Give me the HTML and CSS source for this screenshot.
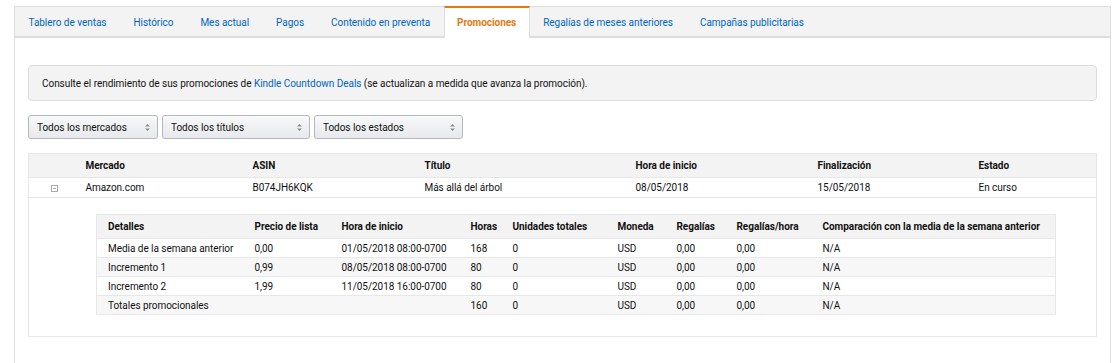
FILE: index.html
```html
<!DOCTYPE html>
<html lang="es">
<head>
<meta charset="utf-8">
<title>Promociones</title>
<link rel="stylesheet" href="styles.css">
</head>
<body>
<div class="page">
  <ul class="tabs">
    <li class="tab">Tablero de ventas</li>
    <li class="tab">Histórico</li>
    <li class="tab">Mes actual</li>
    <li class="tab">Pagos</li>
    <li class="tab">Contenido en preventa</li>
    <li class="tab active">Promociones</li>
    <li class="tab">Regalías de meses anteriores</li>
    <li class="tab">Campañas publicitarias</li>
  </ul>
  <div class="panel">
    <div class="notice">Consulte el rendimiento de sus promociones de <a class="link" href="#">Kindle Countdown Deals</a> (se actualizan a medida que avanza la promoción).</div>
    <div class="filters">
      <div class="select w1"><span>Todos los mercados</span><svg class="arrows" width="5" height="7" viewBox="0 0 5 7"><path d="M2.5 0L5 2.6H0Z M2.5 7L5 4.4H0Z" fill="#8d8d8d"/></svg></div>
      <div class="select w2"><span>Todos los títulos</span><svg class="arrows" width="5" height="7" viewBox="0 0 5 7"><path d="M2.5 0L5 2.6H0Z M2.5 7L5 4.4H0Z" fill="#8d8d8d"/></svg></div>
      <div class="select w3"><span>Todos los estados</span><svg class="arrows" width="5" height="7" viewBox="0 0 5 7"><path d="M2.5 0L5 2.6H0Z M2.5 7L5 4.4H0Z" fill="#8d8d8d"/></svg></div>
    </div>
    <table class="main">
      <colgroup>
        <col class="c-icon"><col class="c-mkt"><col class="c-asin"><col class="c-title"><col class="c-start"><col class="c-end"><col class="c-state">
      </colgroup>
      <thead>
        <tr><th></th><th>Mercado</th><th>ASIN</th><th>Título</th><th>Hora de inicio</th><th>Finalización</th><th>Estado</th></tr>
      </thead>
      <tbody>
        <tr class="row"><td class="icon-cell"><span class="collapse"></span></td><td>Amazon.com</td><td>B074JH6KQK</td><td>Más allá del árbol</td><td>08/05/2018</td><td>15/05/2018</td><td>En curso</td></tr>
        <tr class="detail-row">
          <td colspan="7" class="detail-cell">
            <table class="inner">
              <colgroup>
                <col class="d1"><col class="d2"><col class="d3"><col class="d4"><col class="d5"><col class="d6"><col class="d7"><col class="d8"><col class="d9">
              </colgroup>
              <thead>
                <tr><th>Detalles</th><th>Precio de lista</th><th>Hora de inicio</th><th>Horas</th><th>Unidades totales</th><th>Moneda</th><th>Regalías</th><th>Regalías/hora</th><th>Comparación con la media de la semana anterior</th></tr>
              </thead>
              <tbody>
                <tr><td>Media de la semana anterior</td><td>0,00</td><td>01/05/2018 08:00-0700</td><td>168</td><td>0</td><td>USD</td><td>0,00</td><td>0,00</td><td>N/A</td></tr>
                <tr class="alt"><td>Incremento 1</td><td>0,99</td><td>08/05/2018 08:00-0700</td><td>80</td><td>0</td><td>USD</td><td>0,00</td><td>0,00</td><td>N/A</td></tr>
                <tr><td>Incremento 2</td><td>1,99</td><td>11/05/2018 16:00-0700</td><td>80</td><td>0</td><td>USD</td><td>0,00</td><td>0,00</td><td>N/A</td></tr>
                <tr class="alt"><td>Totales promocionales</td><td></td><td></td><td>160</td><td>0</td><td>USD</td><td>0,00</td><td>0,00</td><td>N/A</td></tr>
              </tbody>
            </table>
          </td>
        </tr>
      </tbody>
    </table>
  </div>
</div>
</body>
</html>
```
FILE: styles.css
```css
* { box-sizing: border-box; }
html, body { height: 100%; }
body {
  margin: 0;
  padding: 6px 8px 0 14px;
  background: #fff;
  font-family: Roboto, "Liberation Sans", Arial, sans-serif;
  font-size: 10px;
  letter-spacing: -0.04px;
  color: #111;
}
.page {
  height: 100%;
  border: 1px solid #dddddd;
  border-bottom: none;
  display: flex;
  flex-direction: column;
}
.tabs {
  list-style: none;
  margin: 0;
  padding: 0;
  display: flex;
  background: #f3f3f3;
  border-bottom: 2px solid #dddddd;
  height: 31px;
}
.tab {
  padding: 1px 13.5px 0;
  line-height: 29px;
  color: #0066c0;
  white-space: nowrap;
}
.tab.active {
  background: #fff;
  color: #e47911;
  font-weight: 700;
  padding: 0 12.5px;
  border-left: 1px solid #dddddd;
  border-right: 1px solid #dddddd;
  border-top: 2px solid #e47911;
  margin-top: -1px;
  height: 32px;
  line-height: 29px;
}
.panel {
  padding: 27px 13px 28px 13px;
}
.notice {
  background: #f3f3f3;
  border: 1px solid #dddddd;
  border-radius: 4px;
  height: 36px;
  line-height: 35px;
  padding: 0 13px;
}
.link { color: #0066c0; text-decoration: none; }
.filters {
  display: flex;
  gap: 4px;
  margin-top: 14px;
}
.select {
  height: 24px;
  border: 1px solid #b4b7bc;
  border-radius: 3px;
  background: linear-gradient(#f7f8fa, #e7e9ec);
  display: flex;
  align-items: center;
  justify-content: space-between;
  padding: 0 7px 0 8px;
  box-shadow: inset 0 1px 0 rgba(255,255,255,.6);
}
.w1 { width: 130px; }
.w2 { width: 148px; }
.w3 { width: 149px; }
.arrows { display: block; }
.main {
  margin-top: 14px;
  width: 100%;
  border-collapse: collapse;
  table-layout: fixed;
  border: 1px solid #e7e7e7;
}
.c-icon { width: 50px; }
.c-mkt { width: 167px; }
.c-asin { width: 172px; }
.c-title { width: 211px; }
.c-start { width: 182px; }
.c-end { width: 161px; }
.c-state { width: auto; }
.main > thead th {
  background: #f3f3f3;
  font-weight: 700;
  text-align: left;
  height: 24px;
  padding: 0 7px;
  border-bottom: 1px solid #e7e7e7;
}
.main > tbody > .row td {
  height: 20px;
  padding: 0 7px;
  border-bottom: 1px solid #e7e7e7;
}
.icon-cell { text-align: center; }
.collapse {
  display: inline-block;
  width: 7px;
  height: 7px;
  border: 1px solid #a9a9a9;
  position: relative;
  vertical-align: -1px;
  margin-left: 1px;
}
.collapse::after {
  content: "";
  position: absolute;
  left: 1px;
  right: 1px;
  top: 2px;
  height: 1px;
  background: #a9a9a9;
}
.detail-cell {
  padding: 16px 40px 21px 67px;
  border-bottom: 1px solid #e7e7e7;
}
.inner {
  width: 100%;
  border-collapse: collapse;
  table-layout: fixed;
  border: 1px solid #e7e7e7;
}
.d1 { width: 147px; }
.d2 { width: 87px; }
.d3 { width: 129px; }
.d4 { width: 42px; }
.d5 { width: 105px; }
.d6 { width: 59px; }
.d7 { width: 60px; }
.d8 { width: 86px; }
.d9 { width: auto; }
.inner th {
  background: #f3f3f3;
  font-weight: 700;
  text-align: left;
  height: 24px;
  padding: 0 0 0 11px;
  white-space: nowrap;
  border-bottom: 1px solid #e7e7e7;
}
.inner td {
  height: 19px;
  padding: 0 0 0 11px;
  white-space: nowrap;
  border-bottom: 1px solid #e7e7e7;
}
.inner .alt td { background: #f7f7f7; }
```
